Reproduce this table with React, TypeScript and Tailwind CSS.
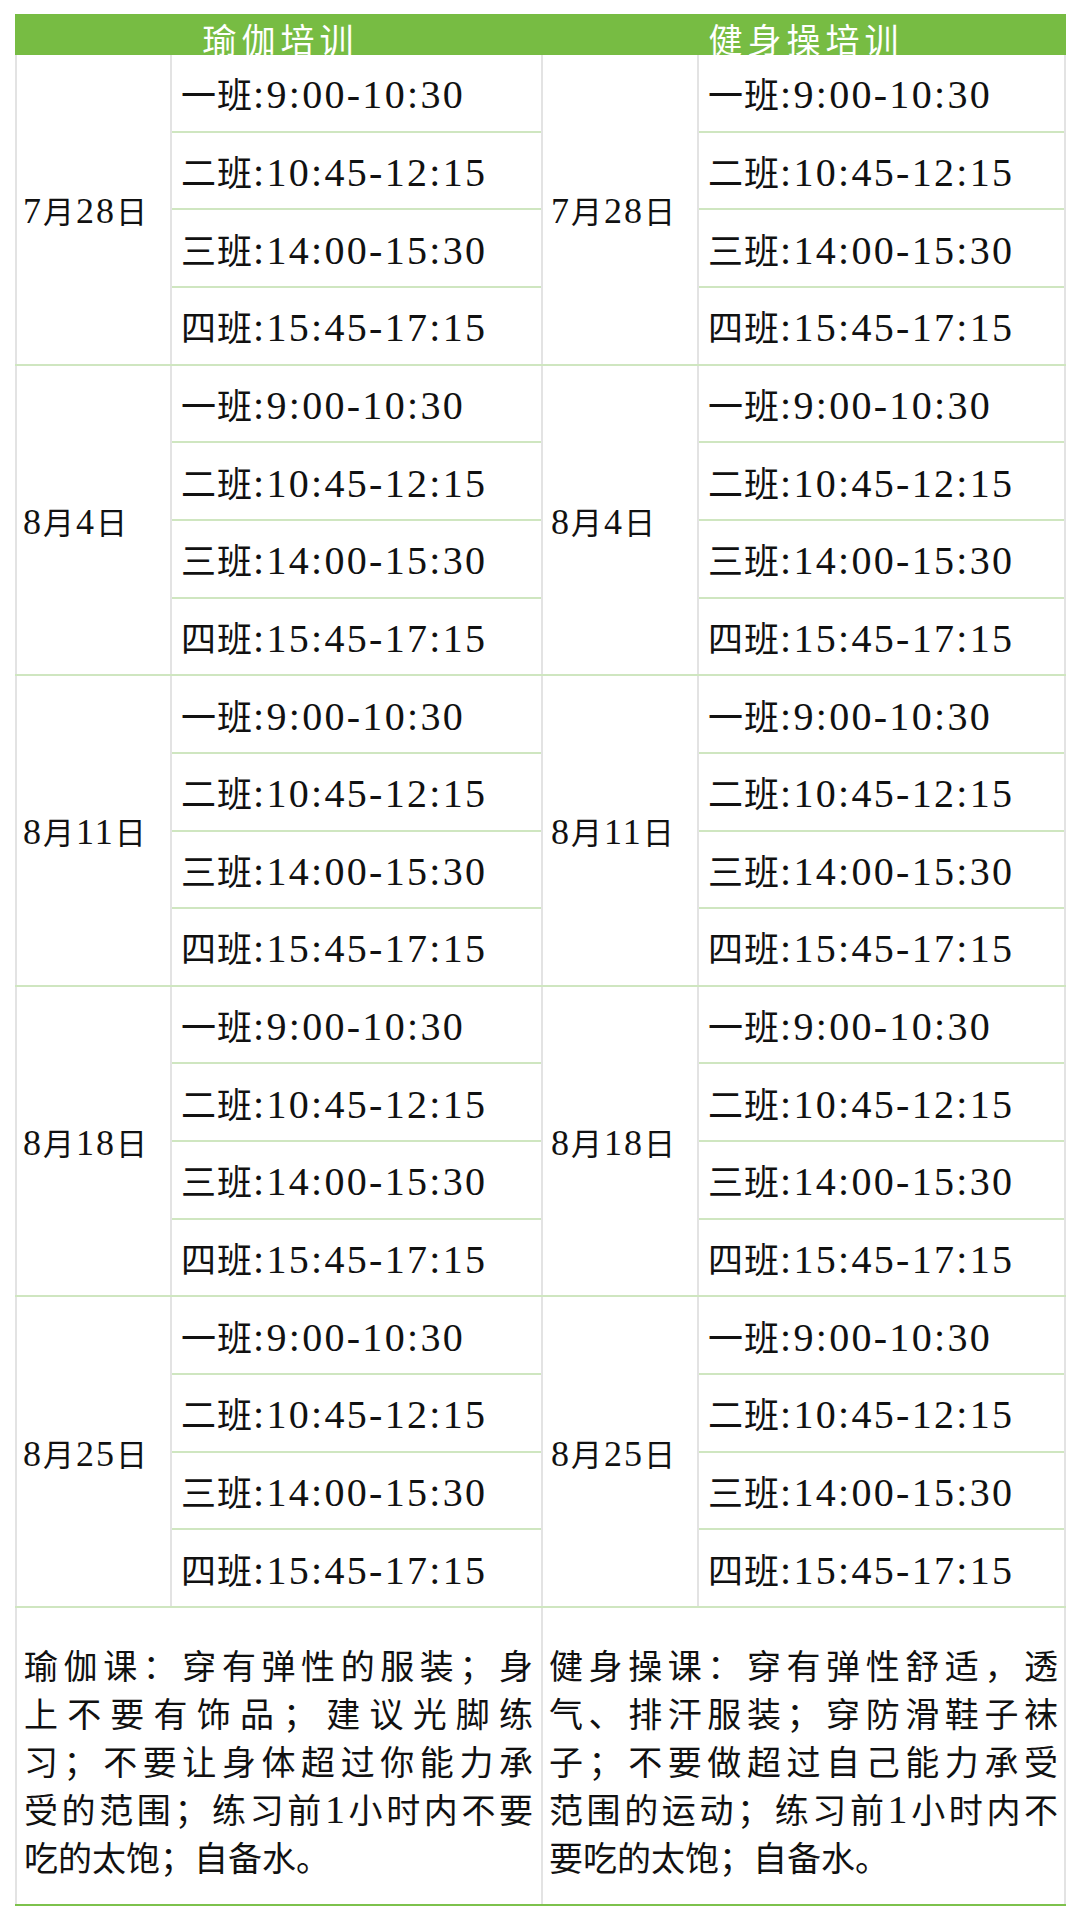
const dates = ['7月28日', '8月4日', '8月11日', '8月18日', '8月25日'];
const slots = ['一班:9:00-10:30', '二班:10:45-12:15', '三班:14:00-15:30', '四班:15:45-17:15'];

const yogaNotes = [
  '瑜伽课：穿有弹性的服装；身',
  '上不要有饰品；建议光脚练',
  '习；不要让身体超过你能力承',
  '受的范围；练习前1小时内不要',
  '吃的太饱；自备水。',
];
const gymNotes = [
  '健身操课：穿有弹性舒适，透',
  '气、排汗服装；穿防滑鞋子袜',
  '子；不要做超过自己能力承受',
  '范围的运动；练习前1小时内不',
  '要吃的太饱；自备水。',
];

const cjkTime = "font-['Noto_Sans_CJK_SC',sans-serif] text-[35px] tracking-[1px]";
const latinTime = "font-['Liberation_Serif',serif] text-[40px] tracking-[2.3px]";
const cjkDate = "font-['Noto_Sans_CJK_SC',sans-serif] text-[31px] tracking-[2px]";
const latinDate = "font-['Liberation_Serif',serif] text-[36px] tracking-[2px]";
const cjkNote = "font-['Noto_Sans_CJK_SC',sans-serif] text-[34px]";
const latinNote = "font-['Liberation_Serif',serif] text-[40px]";

function Mixed({ text, cjk, latin }: { text: string; cjk: string; latin: string }) {
  const parts = text.split(/([\x00-\x7f]+)/).filter(Boolean);
  return (
    <>
      {parts.map((p, i) =>
        /^[\x00-\x7f]+$/.test(p) ? (
          <span key={i} className={latin}>
            {p}
          </span>
        ) : (
          <span key={i} className={cjk}>
            {p}
          </span>
        )
      )}
    </>
  );
}

function Half({ date, right }: { date: string; right?: boolean }) {
  return (
    <div
      className={
        right
          ? 'flex w-[525px] border-r-2 border-[#e3e3e3]'
          : 'flex w-[526px]'
      }
    >
      <div
        className={
          right
            ? 'flex w-[158px] items-center border-x-2 border-[#e3e3e3] pl-[8px] pt-[4px] text-[#111]'
            : 'flex w-[157px] items-center border-x-2 border-[#e3e3e3] pl-[6px] pt-[4px] text-[#111]'
        }
      >
        <div className="leading-none whitespace-nowrap">
          <Mixed text={date} cjk={cjkDate} latin={latinDate} />
        </div>
      </div>
      <div className="flex flex-1 flex-col">
        {slots.map((s, i) => (
          <div
            key={s}
            className={
              i < 3
                ? 'flex flex-1 items-center border-b-2 border-[#cfe6c0] pl-[9px] pt-[5px] text-[#111]'
                : 'flex flex-1 items-center pl-[9px] pt-[5px] text-[#111]'
            }
          >
            <div className="leading-none whitespace-nowrap">
              <Mixed text={s} cjk={cjkTime} latin={latinTime} />
            </div>
          </div>
        ))}
      </div>
    </div>
  );
}

function Notes({ lines, right }: { lines: string[]; right?: boolean }) {
  return (
    <div
      className={
        right
          ? 'w-[525px] border-x-2 border-[#e3e3e3] pl-[6px] pr-[6px] pt-[33px] text-[#111]'
          : 'w-[526px] border-l-2 border-[#e3e3e3] pl-[7px] pr-[8px] pt-[33px] text-[#111]'
      }
    >
      {lines.map((l, i) => (
        <div
          key={i}
          className={
            i < lines.length - 1
              ? 'h-[48px] leading-[48px] whitespace-nowrap [text-align-last:justify] text-justify'
              : 'h-[48px] leading-[48px] whitespace-nowrap text-left'
          }
        >
          <Mixed text={l} cjk={cjkNote} latin={latinNote} />
        </div>
      ))}
    </div>
  );
}

export default function App() {
  return (
    <div className="h-[1921px] w-[1080px] bg-white pl-[15px] pt-[14px]">
      <div className="w-[1051px]">
        <div className="flex h-[41px] overflow-hidden bg-[#77bc43] text-white">
          <div className="flex w-[526px] justify-center pl-[5px] pt-[8px]">
            <span className="font-['Noto_Sans_CJK_SC',sans-serif] text-[34px] leading-none tracking-[5px]">
              瑜伽培训
            </span>
          </div>
          <div className="flex w-[525px] justify-center pl-[5px] pt-[8px]">
            <span className="font-['Noto_Sans_CJK_SC',sans-serif] text-[34px] leading-none tracking-[5px]">
              健身操培训
            </span>
          </div>
        </div>
        {dates.map((d) => (
          <div key={d} className="flex h-[310.6px] border-b-2 border-[#cfe6c0]">
            <Half date={d} />
            <Half date={d} right />
          </div>
        ))}
        <div className="flex h-[298px] border-b-2 border-[#7dc24c]">
          <Notes lines={yogaNotes} />
          <Notes lines={gymNotes} right />
        </div>
      </div>
    </div>
  );
}
